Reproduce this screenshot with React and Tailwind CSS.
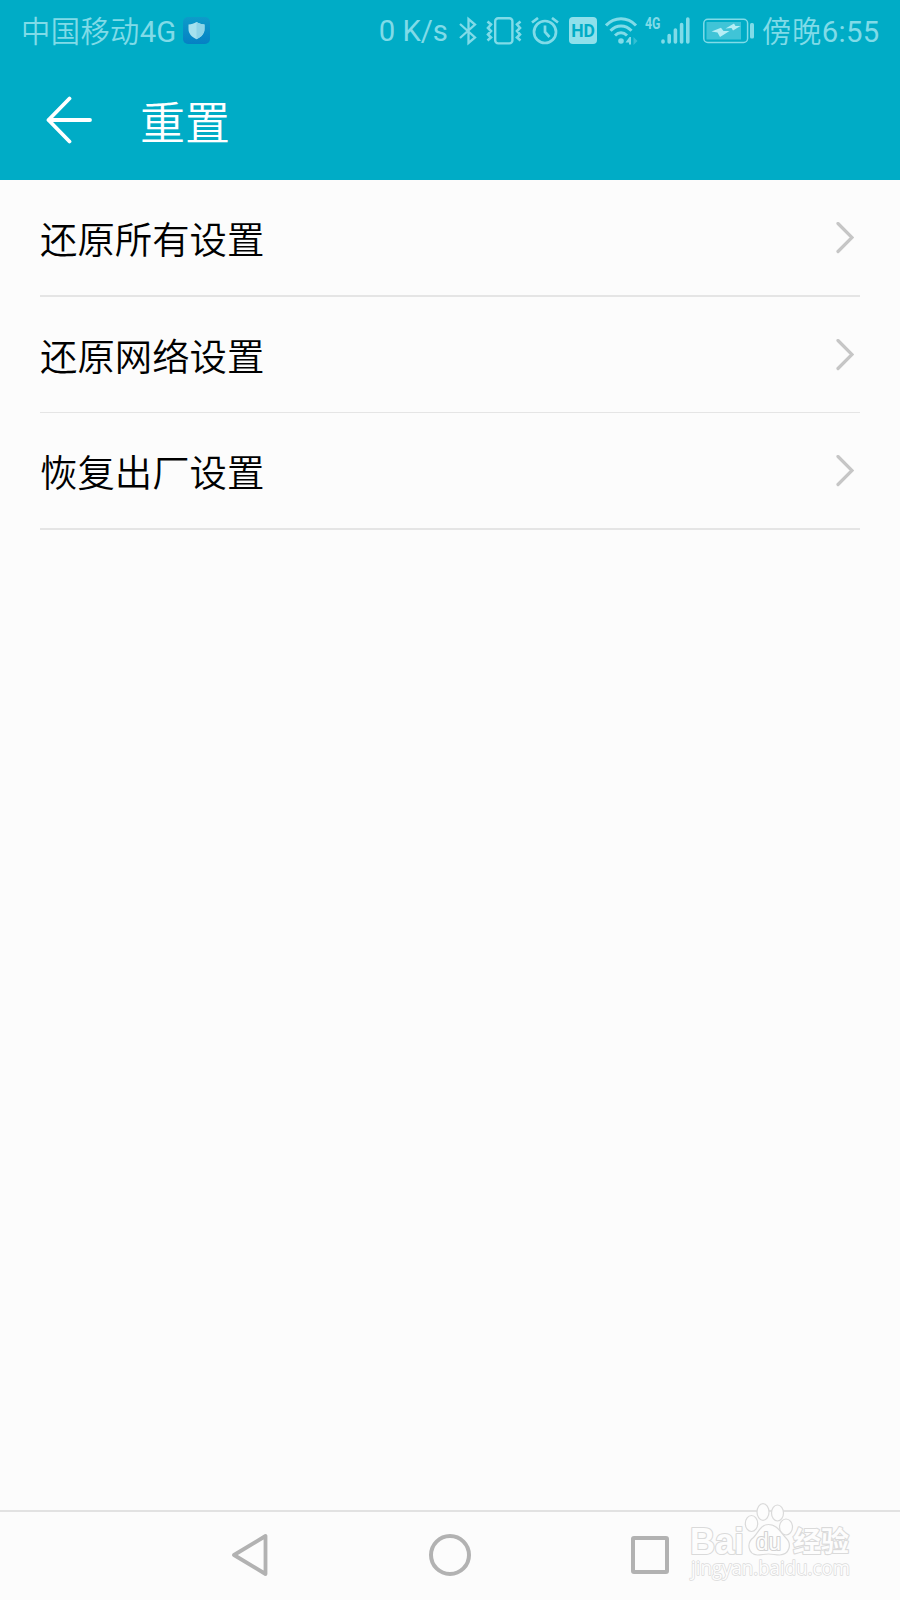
import React from 'react';

const rows = [
  { label: '还原所有设置', size: 'h-[117px] border-b-2' },
  { label: '还原网络设置', size: 'h-[116px] border-b' },
  { label: '恢复出厂设置', size: 'h-[117px] border-b-2' },
];

const ShieldBadge = () => (
  <svg className="ml-[7px] shrink-0" width="27" height="27" viewBox="0 0 27 27">
    <defs>
      <linearGradient id="badge" x1="0" y1="0" x2="0" y2="1">
        <stop offset="0" stopColor="#0d9cc9" />
        <stop offset="1" stopColor="#0580c4" />
      </linearGradient>
    </defs>
    <rect width="27" height="27" rx="5" fill="url(#badge)" />
    <path d="M13.500 5c2.500 1.700 5 2.300 8 2.600v4.400c0 4.500-3 8-8 10.200-5-2.200-8-5.700-8-10.200V7.600c3-.3 5.500-.9 8-2.600z" fill="#a6e1ee" />
    <path d="M13.500 5c2.500 1.700 5 2.300 8 2.600v4.400c0 4.500-3 8-8 10.200z" fill="#8ed4e8" />
  </svg>
);

const BluetoothIcon = () => (
  <svg className="ml-[11px] shrink-0" width="18" height="30" viewBox="0 0 18 30" fill="none" stroke="currentColor" strokeWidth="2.300">
    <path d="M1 8l15 13.500-6.500 5.500V3l6.500 5.500L1 22" />
  </svg>
);

const VibrateIcon = () => (
  <svg className="ml-[9px] shrink-0" width="36" height="28" viewBox="0 0 36 28" fill="none" stroke="currentColor" strokeWidth="2.400">
    <rect x="9.200" y="1.200" width="17.200" height="25.200" rx="3" />
    <path d="M1.500 4.500l3.500 3-3 3.500 3 3-3 3.500 3 3-3.500 3M34.500 4.500l-3.500 3 3 3.500-3 3 3 3.500-3 3 3.500 3" strokeWidth="2.600" />
  </svg>
);

const AlarmIcon = () => (
  <svg className="ml-[9px] shrink-0" width="28" height="28" viewBox="0 0 28 28" fill="none" stroke="currentColor" strokeWidth="2.700">
    <circle cx="14" cy="15" r="11" />
    <path d="M14 8.500V15l4.500 5" />
    <path d="M1 5.500l6-4.500M27 5.500L21 1" />
  </svg>
);

const WifiIcon = () => (
  <svg className="ml-[8px] shrink-0" width="34" height="28" viewBox="0 0 34 28" fill="none" stroke="currentColor" strokeWidth="3">
    <path d="M1 8.500c8.500-9 21.500-9 30 0M5.500 13.700c6-6.300 15-6.300 21 0M10 18.500c3.700-3.600 8.300-3.600 12 0" />
    <circle cx="16" cy="24" r="2.800" fill="currentColor" stroke="none" />
    <path d="M26 20v7.500h-2v-2h-3.500l4-5.500z" fill="currentColor" stroke="none" />
    <path d="M28.500 20l4 4-4 4z" fill="currentColor" stroke="none" opacity=".4" />
  </svg>
);

const NetworkType = () => (
  <svg className="ml-[6px] shrink-0" width="16" height="40" viewBox="0 0 16 40" fill="currentColor">
    <text x="0" y="18" fontSize="16.500" fontWeight="700" fontFamily="Roboto" textLength="15.500" lengthAdjust="spacingAndGlyphs">4G</text>
  </svg>
);

const SignalIcon = () => (
  <svg className="shrink-0" width="29" height="28" viewBox="0 0 29 28" stroke="currentColor" strokeWidth="3.600" strokeLinecap="round">
    <path d="M2 24V25M8.200 18.500v6.500M14.400 13v12M20.600 7.500v17.500M26.800 2v23" />
  </svg>
);

const BatteryIcon = () => (
  <svg className="ml-[13px] shrink-0" width="51" height="26" viewBox="0 0 51 26">
    <rect x=".8" y="1.300" width="43.800" height="23.200" rx="4" fill="none" stroke="currentColor" strokeWidth="1.500" />
    <rect x="3.500" y="4" width="34.500" height="17.500" fill="currentColor" opacity=".5" />
    <path d="M8.500 13.500l9.500-3.800 2.500 3.300h6l-9.500 6-2.500-4.500zM22.500 10.500l8.500-5 1.500 2.500h5l-7.500 4.500-1.500-2.500z" fill="#b5eef5" />
    <rect x="47" y="5" width="4" height="15.500" rx="1.500" fill="currentColor" />
  </svg>
);

const StatusBar = () => (
  <div className="flex h-[61px] items-center pl-[21px] text-[29.300px] text-[#80dbe8]">
    <span className="w-[155px] shrink-0 whitespace-nowrap pt-[4px] font-[350] leading-none">
      <span className="tracking-[0.400px]">中国移动</span>
      <span className="font-normal">4G</span>
    </span>
    <ShieldBadge />
    <span className="ml-auto whitespace-nowrap pt-[3px] leading-none">0 K/s</span>
    <BluetoothIcon />
    <VibrateIcon />
    <AlarmIcon />
    <span className="ml-[10px] flex h-[27px] w-[28px] shrink-0 items-center justify-center rounded bg-[#8fe0eb] pt-[2px] text-[17.500px] font-bold leading-none text-[#00acc6]">
      HD
    </span>
    <WifiIcon />
    <NetworkType />
    <SignalIcon />
    <BatteryIcon />
    <span className="ml-[8px] w-[138px] shrink-0 whitespace-nowrap pt-[4px] font-[350] leading-none">
      <span className="tracking-[0.600px]">傍晚</span>
      <span className="font-normal tracking-[0.300px]">6:55</span>
    </span>
  </div>
);

const Row = ({ label, size }) => (
  <div className={`mx-10 flex items-center justify-between border-[#e5e5e5] pr-[6px] ${size}`}>
    <span className="pt-[9px] text-[37.400px] font-[350] leading-none text-black">{label}</span>
    <svg width="18" height="32" viewBox="0 0 18 32" fill="none" stroke="#c6c6c6" strokeWidth="3.200" strokeLinecap="round">
      <path d="M2 1.500l14 14-14 14" />
    </svg>
  </div>
);

const Watermark = () => (
  <div className="absolute left-[686px] top-[1500px]">
    <svg width="180" height="96" viewBox="0 0 180 96" fill="#fdfdfd" stroke="#dadada" strokeWidth="1.200" strokeLinejoin="round">
      <ellipse cx="65.500" cy="23.500" rx="6.200" ry="8" />
      <ellipse cx="77" cy="12" rx="6" ry="8.300" />
      <ellipse cx="91.500" cy="13" rx="6" ry="8" />
      <ellipse cx="100" cy="27" rx="6.500" ry="8" />
      <path d="M82.500 24.500c-8 0-10 8-15 13-7 5-6 17 4 17.500 4 0 7-1 11-1s7 1 11 1c10-.5 13-11 6-17.500-5-5-8-13-17-13z" />
      <g paintOrder="stroke" strokeWidth="2.200">
        <text x="4" y="53.500" fontSize="36" fontWeight="700" textLength="54" lengthAdjust="spacingAndGlyphs" fontFamily="Liberation Sans">Bai</text>
        <text x="70" y="50" fontSize="23" textLength="25" lengthAdjust="spacingAndGlyphs" fontFamily="Liberation Sans" stroke="#d2d2d2">du</text>
        <text x="107" y="52" fontSize="28" fontWeight="700" textLength="56" fontFamily="Noto Sans CJK SC">经验</text>
        <text x="5" y="74.500" fontSize="20" textLength="159" lengthAdjust="spacingAndGlyphs" fontFamily="Open Sans" strokeWidth="1.500">jingyan.baidu.com</text>
      </g>
    </svg>
  </div>
);

const NavBar = () => (
  <div className="flex h-[90px] items-center border-t-2 border-[#e2e2e2] pb-[2px] pl-[231px]">
    <svg width="38" height="44" viewBox="0 0 38 44" fill="none" stroke="#b2b2b2" strokeWidth="3.800" strokeLinejoin="round">
      <path d="M34.500 3v38L3 22z" />
    </svg>
    <div className="ml-[160px] size-[42px] rounded-full border-[4px] border-[#b2b2b2]"></div>
    <div className="ml-[160px] size-[38px] rounded-[3px] border-[4px] border-[#b2b2b2]"></div>
  </div>
);

const App = () => {
  return (
    <div className="relative flex h-[1600px] w-[900px] flex-col overflow-hidden bg-[#fcfcfc] font-['Roboto','Noto_Sans_CJK_SC',sans-serif]">
      <header className="h-[180px] shrink-0 bg-[#00acc6]">
        <StatusBar />
        <div className="flex h-[119px] items-center pl-[46px] text-white">
          <svg className="mb-[2px]" width="48" height="48" viewBox="0 0 48 48" fill="none" stroke="currentColor" strokeWidth="3.800" strokeLinecap="round" strokeLinejoin="round">
            <path d="M23.500 2.500L2.500 24l21 21.500M2.500 24H44" />
          </svg>
          <h1 className="ml-[46px] pt-[7px] text-[45px] font-[350] leading-none">重置</h1>
        </div>
      </header>
      <main className="flex-1">
        {rows.map((row) => (
          <Row key={row.label} {...row} />
        ))}
      </main>
      <NavBar />
      <Watermark />
    </div>
  );
};

export default App;
